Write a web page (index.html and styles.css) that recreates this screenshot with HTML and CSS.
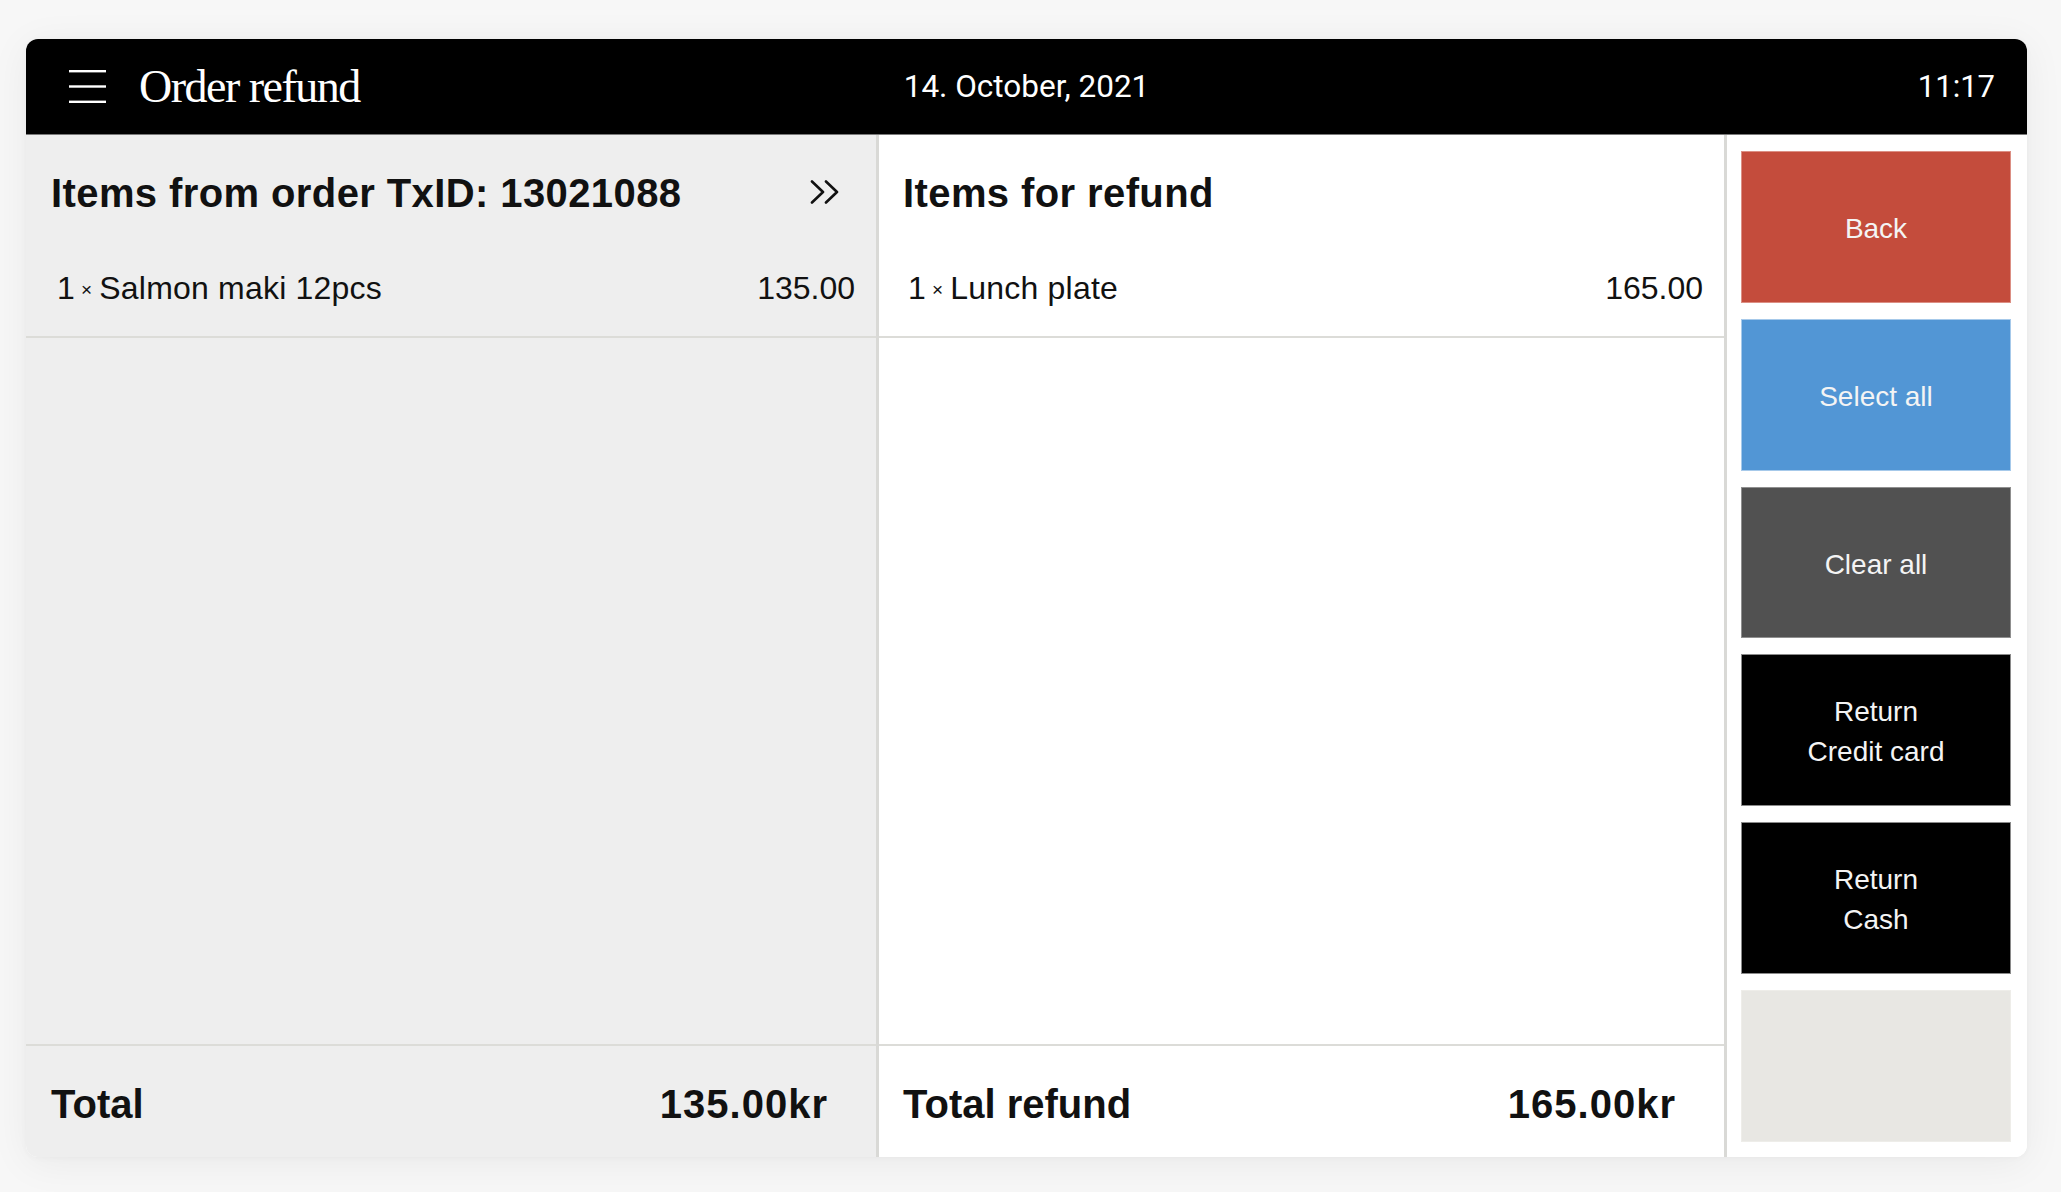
FILE: index.html
```html
<!DOCTYPE html>
<html lang="en">
<head>
<meta charset="utf-8">
<title>Order refund</title>
<link rel="stylesheet" href="styles.css">
</head>
<body>
<div class="app">
  <header class="topbar">
    <div class="topbar-left">
      <svg class="menu-icon" width="37" height="33" viewBox="0 0 37 33" aria-hidden="true">
        <rect x="0" y="0" width="37" height="2.4" fill="#fff"/>
        <rect x="0" y="15.3" width="37" height="2.4" fill="#fff"/>
        <rect x="0" y="30.6" width="37" height="2.4" fill="#fff"/>
      </svg>
      <h1 class="title">Order refund</h1>
    </div>
    <div class="topbar-date">14. October, 2021</div>
    <div class="topbar-time">11:17</div>
  </header>
  <main class="content">
    <section class="panel panel-order">
      <div class="panel-head">
        <h2 class="panel-title">Items from order TxID: 13021088</h2>
        <svg class="chevrons" width="30" height="24" viewBox="0 0 30 24" aria-hidden="true">
          <path d="M2 1.5 L13 12 L2 22.5" fill="none" stroke="#111" stroke-width="2.6" stroke-linecap="round" stroke-linejoin="round"/>
          <path d="M16 1.5 L27 12 L16 22.5" fill="none" stroke="#111" stroke-width="2.6" stroke-linecap="round" stroke-linejoin="round"/>
        </svg>
      </div>
      <ul class="items">
        <li class="item">
          <span class="item-name"><span class="qty">1</span><span class="times">×</span>Salmon maki 12pcs</span>
          <span class="item-price">135.00</span>
        </li>
      </ul>
      <div class="panel-fill"></div>
      <footer class="panel-foot">
        <span>Total</span>
        <span class="amount">135.00kr</span>
      </footer>
    </section>
    <section class="panel panel-refund">
      <div class="panel-head">
        <h2 class="panel-title">Items for refund</h2>
      </div>
      <ul class="items">
        <li class="item">
          <span class="item-name"><span class="qty">1</span><span class="times">×</span>Lunch plate</span>
          <span class="item-price">165.00</span>
        </li>
      </ul>
      <div class="panel-fill"></div>
      <footer class="panel-foot">
        <span>Total refund</span>
        <span class="amount">165.00kr</span>
      </footer>
    </section>
    <aside class="actions">
      <button class="btn btn-back">Back</button>
      <button class="btn btn-select">Select all</button>
      <button class="btn btn-clear">Clear all</button>
      <button class="btn btn-dark">Return<br>Credit card</button>
      <button class="btn btn-dark">Return<br>Cash</button>
      <button class="btn btn-empty" aria-label="empty"></button>
    </aside>
  </main>
</div>
</body>
</html>
```

FILE: styles.css
```css
* { box-sizing: border-box; }

html, body {
  margin: 0;
  padding: 0;
  background: #f7f7f7;
  width: 2061px;
  height: 1192px;
  overflow: hidden;
}

body {
  font-family: "Liberation Sans", Arial, sans-serif;
  color: #111;
}

.app {
  margin: 39px 34px 35px 26px;
  height: 1118px;
  display: flex;
  flex-direction: column;
  border-radius: 12px;
  overflow: hidden;
  background: #fff;
  box-shadow: 0 6px 40px rgba(0, 0, 0, 0.06), 0 1px 6px rgba(0, 0, 0, 0.03);
}

/* Top bar */
.topbar {
  height: 96px;
  flex: none;
  background: #000;
  border-bottom: 1px solid #7a7a7a;
  display: grid;
  grid-template-columns: 1fr auto 1fr;
  align-items: center;
  padding: 0 32px;
  color: #fff;
}

.topbar-left {
  display: flex;
  align-items: center;
  gap: 33px;
  margin-left: 11px;
}

.menu-icon { display: block; }

.title {
  margin: 0;
  font-family: "Liberation Serif", "Times New Roman", serif;
  font-weight: 400;
  font-size: 46px;
  letter-spacing: -1.5px;
  line-height: 1;
}

.topbar-date,
.topbar-time {
  font-family: Roboto, "Liberation Sans", sans-serif;
  font-size: 31.5px;
  line-height: 1;
}

.topbar-time { justify-self: end; font-size: 31px; }

/* Content */
.content {
  flex: 1;
  display: flex;
  min-height: 0;
}

.panel {
  display: flex;
  flex-direction: column;
}

.panel-order {
  width: 853px;
  background: #eeeeee;
  border-right: 3px solid #d9d9d6;
}

.panel-refund {
  width: 848px;
  background: #fff;
  border-right: 3px solid #d9d9d6;
}

.panel-head {
  display: flex;
  align-items: center;
  justify-content: space-between;
  padding: 34px 36px 0 25px;
  height: 82px;
}

.panel-refund .panel-head { padding-left: 24px; }

.panel-title {
  margin: 0;
  font-size: 40px;
  font-weight: 700;
  line-height: 48px;
  letter-spacing: 0.4px;
}

.chevrons {
  display: block;
  margin-top: -2px;
}

.items {
  list-style: none;
  margin: 0;
  padding: 0;
  border-bottom: 2px solid #dcdcd8;
}

.item {
  display: flex;
  justify-content: space-between;
  align-items: baseline;
  padding: 51px 21px 23px 31px;
  line-height: 40px;
  font-size: 32px;
}

.item-name { letter-spacing: 0.2px; }

.panel-refund .item { padding-left: 29px; }

.times {
  font-size: 19px;
  margin: 0 7px 0 6px;
  position: relative;
  top: -3px;
}

.panel-fill { flex: 1; }

.panel-foot {
  height: 113px;
  border-top: 2px solid #dcdcd8;
  display: flex;
  justify-content: space-between;
  align-items: center;
  padding: 5px 48px 0 25px;
  font-size: 40px;
  font-weight: 700;
}

.amount { letter-spacing: 1px; }

.panel-refund .panel-foot { padding-left: 24px; }

/* Actions */
.actions {
  flex: 1;
  display: flex;
  flex-direction: column;
  gap: 16px;
  padding: 16px 16px 15px 14px;
  background: #fff;
}

.btn {
  flex: 1;
  margin: 0;
  border: 1px solid rgba(255, 255, 255, 0.35);
  font-family: "Liberation Sans", Arial, sans-serif;
  font-size: 28px;
  line-height: 40px;
  color: #f4f4f4;
  padding: 4px 0 0;
  cursor: pointer;
}

.btn-back { background: #c44c3c; border-color: #dc8f84; }
.btn-select { background: #5296d5; border-color: #a6c9ea; }
.btn-clear { background: #515151; border-color: #8f8f8f; }
.btn-dark { background: #000; border-color: #8a8a8a; }
.btn-empty { background: #e8e7e3; border-color: #eeede9; }
```
